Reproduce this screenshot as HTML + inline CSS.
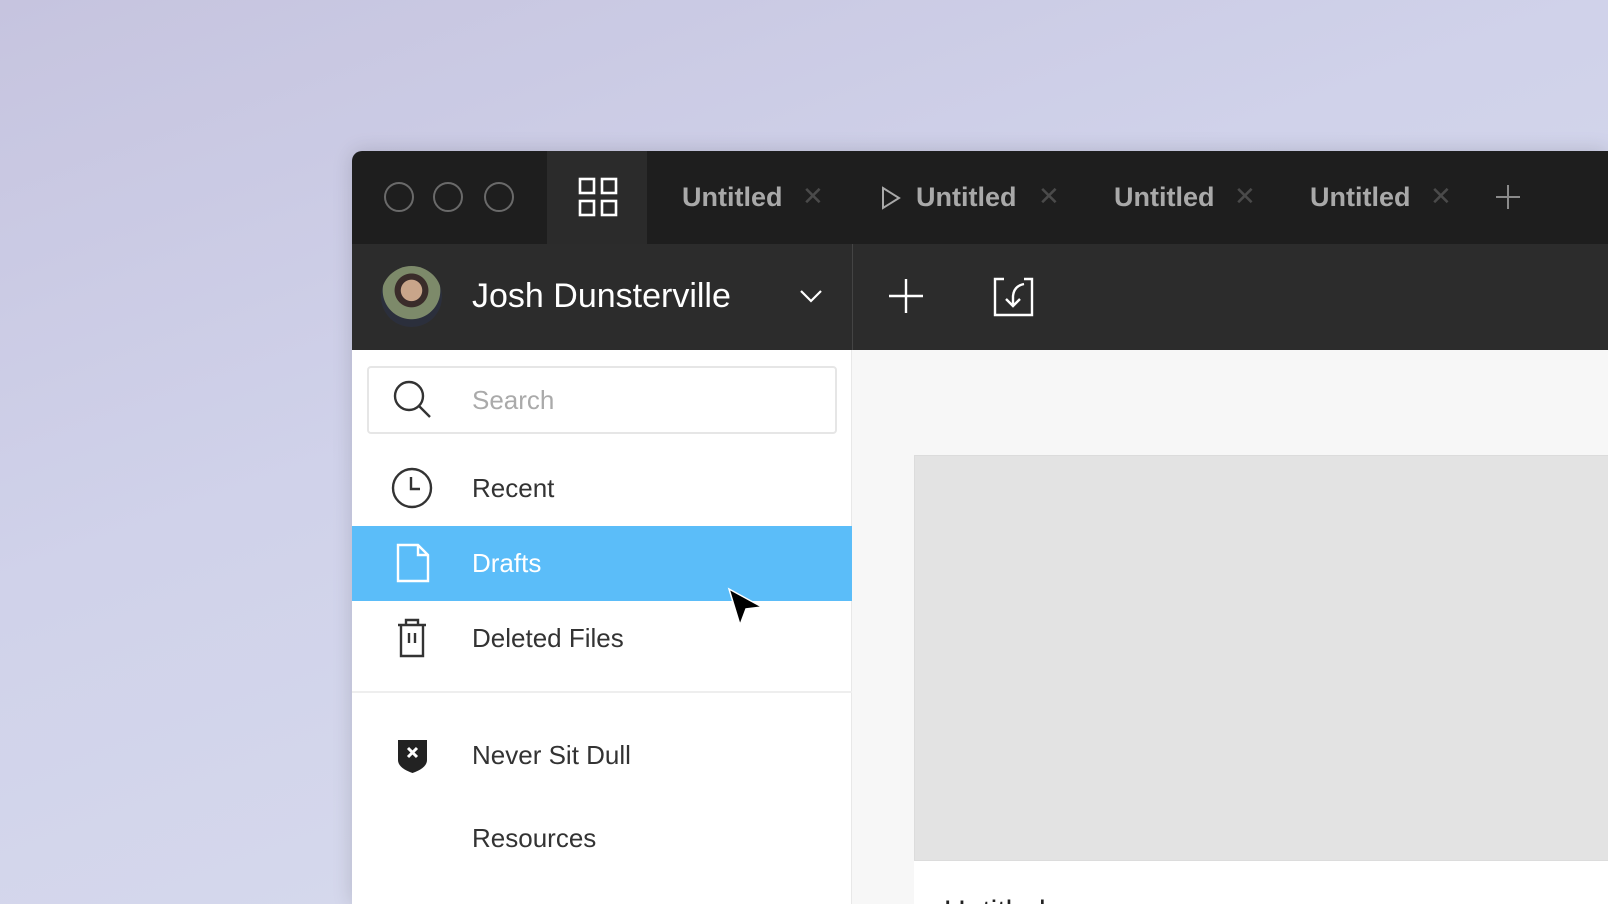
<!DOCTYPE html>
<html><head><meta charset="utf-8"><style>
*{margin:0;padding:0;box-sizing:border-box}
html,body{width:1608px;height:904px;overflow:hidden}
body{position:relative;font-family:"Liberation Sans",sans-serif;
background:linear-gradient(160deg,#c6c4df 0%,#d0d2ea 40%,#dadeee 100%);}
.a{position:absolute}
.win{left:352px;top:151px;width:1256px;height:753px;background:#1e1e1e;border-radius:10px 0 0 0;overflow:hidden;box-shadow:0 0 20px rgba(0,0,0,.15)}
.t{position:absolute;color:#a9a9a9;font-size:27px;font-weight:bold;top:31px}
.x{position:absolute;color:#4a4a4a;font-size:26px;top:30px}
.nav{position:absolute;left:120px;font-size:26px;color:#333}
</style></head><body>
<div class="a win">
  <div class="a" style="left:195px;top:0;width:100px;height:93px;background:#2b2b2b"></div>
  <svg class="a" style="left:0;top:0" width="320" height="93">
    <g fill="none" stroke="#6a6a6a" stroke-width="2"><circle cx="47" cy="46" r="14"/><circle cx="96" cy="46" r="14"/><circle cx="147" cy="46" r="14"/></g>
    <g fill="none" stroke="#fff" stroke-width="2.6"><rect x="228" y="28" width="14" height="14"/><rect x="250" y="28" width="14" height="14"/><rect x="228" y="50" width="14" height="14"/><rect x="250" y="50" width="14" height="14"/></g>
  </svg>
  <div class="t" style="left:330px">Untitled</div><div class="x" style="left:450px">✕</div>
  <svg class="a" style="left:528px;top:35px" width="22" height="24"><path d="M3 2 L19 12 L3 22 Z" fill="none" stroke="#a9a9a9" stroke-width="2"/></svg>
  <div class="t" style="left:564px">Untitled</div><div class="x" style="left:686px">✕</div>
  <div class="t" style="left:762px">Untitled</div><div class="x" style="left:882px">✕</div>
  <div class="t" style="left:958px">Untitled</div><div class="x" style="left:1078px">✕</div>
  <svg class="a" style="left:1142px;top:32px" width="28" height="28"><path d="M14 2V26M2 14H26" stroke="#8a8a8a" stroke-width="2"/></svg>
  <div class="a" style="left:0;top:93px;width:1256px;height:106px;background:#2c2c2c"></div>
  <div class="a" style="left:500px;top:93px;width:1px;height:106px;background:#444"></div>
  <div class="a" style="left:29px;top:115px;width:61px;height:61px;border-radius:50%;background:radial-gradient(circle at 50% 40%,#c9a58a 0 22%,#3a2c2a 23% 35%,#7d8a6a 36% 60%,#2b2f3c 61%)"></div>
  <div class="a" style="left:120px;top:126px;color:#fff;font-size:34px">Josh Dunsterville</div>
  <svg class="a" style="left:447px;top:137px" width="24" height="16"><path d="M2 3 L12 13 L22 3" fill="none" stroke="#fff" stroke-width="2.2"/></svg>
  <svg class="a" style="left:536px;top:127px" width="36" height="36"><path d="M18 1V35M1 18H35" stroke="#fff" stroke-width="2.4"/></svg>
  <svg class="a" style="left:640px;top:125px" width="44" height="42"><path d="M12 3H3V39H40V3H32" fill="none" stroke="#fff" stroke-width="2.4"/><path d="M32 8 Q22 10 21 20 V30 M14 23 L21 30 L28 23" fill="none" stroke="#fff" stroke-width="2.4"/></svg>
  <div class="a" style="left:0;top:199px;width:500px;height:560px;background:#fff;border-right:1px solid #e8e8e8"></div>
  <div class="a" style="left:15px;top:215px;width:470px;height:68px;border:2px solid #e6e6e6;border-radius:4px"></div>
  <svg class="a" style="left:40px;top:228px" width="42" height="42"><circle cx="17" cy="17" r="14" fill="none" stroke="#333" stroke-width="2.4"/><path d="M27 27L38 38" stroke="#333" stroke-width="2.4"/></svg>
  <div class="nav" style="top:234px;color:#aaa">Search</div>
  <svg class="a" style="left:39px;top:316px" width="42" height="42"><circle cx="21" cy="21" r="19" fill="none" stroke="#333" stroke-width="2.4"/><path d="M20 10V22H29" fill="none" stroke="#333" stroke-width="2.4"/></svg>
  <div class="nav" style="top:322px">Recent</div>
  <div class="a" style="left:0;top:375px;width:500px;height:75px;background:#5bbdf9"></div>
  <svg class="a" style="left:44px;top:392px" width="34" height="40"><path d="M2 2H22L32 12V38H2Z M22 2V12H32" fill="none" stroke="#fff" stroke-width="2.4"/></svg>
  <div class="nav" style="top:397px;color:#fff">Drafts</div>
  <svg class="a" style="left:42px;top:466px" width="36" height="42"><path d="M4 8H32M12 8V3H24V8M7 8V39H29V8M15 16V26M21 16V26" fill="none" stroke="#333" stroke-width="2.4"/></svg>
  <div class="nav" style="top:472px">Deleted Files</div>
  <div class="a" style="left:0;top:540px;width:500px;height:2px;background:#eee"></div>
  <svg class="a" style="left:44px;top:587px" width="34" height="36"><path d="M2 2H31V22Q31 30 16.5 35Q2 30 2 22Z" fill="#222"/><path d="M12 10L21 19M21 10L12 19" stroke="#fff" stroke-width="3"/></svg>
  <div class="nav" style="top:589px">Never Sit Dull</div>
  <div class="nav" style="top:672px">Resources</div>
  <div class="a" style="left:500px;top:199px;width:756px;height:560px;background:#f7f7f7"></div>
  <div class="a" style="left:562px;top:304px;width:700px;height:406px;background:#e3e3e3;border:1px solid #dcdcdc"></div>
  <div class="a" style="left:562px;top:710px;width:700px;height:60px;background:#fff"></div>
  <div class="a" style="left:592px;top:744px;font-size:30px;color:#222">Untitled</div>
  <svg class="a" style="left:374px;top:436px" width="40" height="42"><path d="M3 2 L36 20 L20 22 L14 38 Z" fill="#000" stroke="#fff" stroke-width="1.5"/></svg>
</div>
</body></html>
